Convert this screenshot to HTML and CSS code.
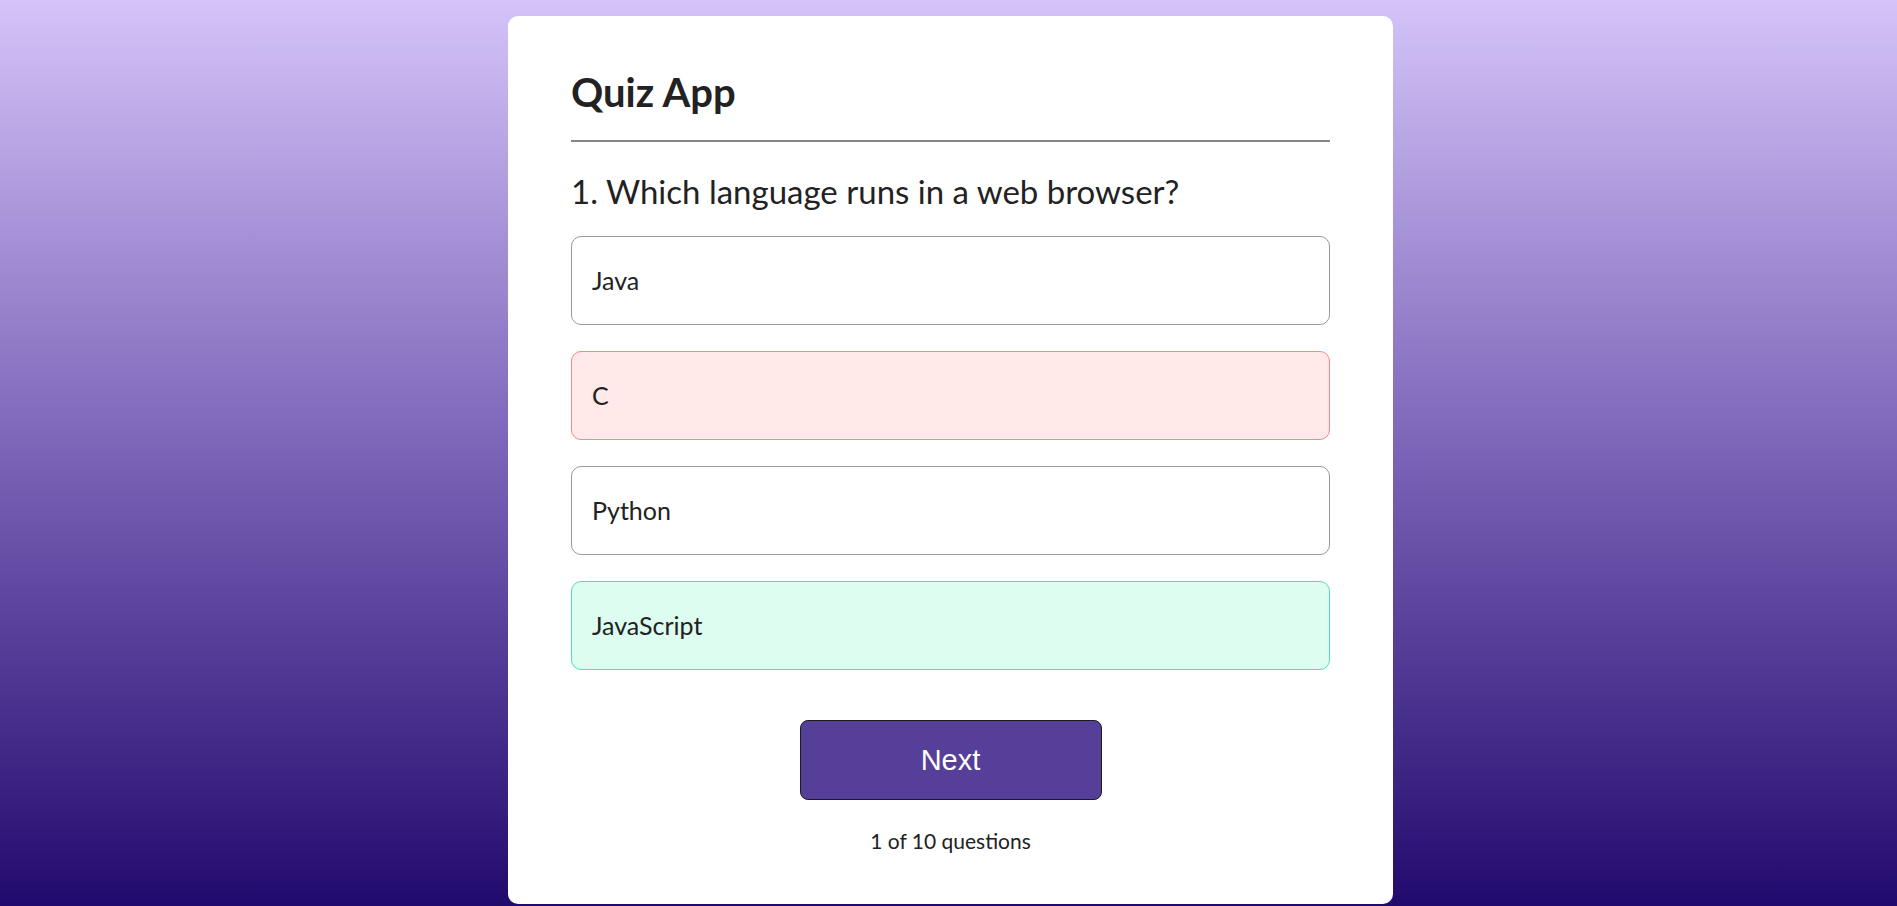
FILE: index.html
```html
<!DOCTYPE html>
<html lang="en">
<head>
<meta charset="utf-8">
<title>Quiz App</title>
<link rel="stylesheet" href="styles.css">
</head>
<body>
<main class="app">
  <h1 class="title">Quiz App</h1>
  <section class="quiz">
    <h2 class="question">1. Which language runs in a web browser?</h2>
    <div class="answers">
      <button class="answer">Java</button>
      <button class="answer incorrect">C</button>
      <button class="answer">Python</button>
      <button class="answer correct">JavaScript</button>
    </div>
    <button class="next-btn">Next</button>
    <p class="progress">1 of 10 questions</p>
  </section>
</main>
</body>
</html>
```
FILE: styles.css
```css
* {
  box-sizing: border-box;
}

html, body {
  margin: 0;
  padding: 0;
}

body {
  min-height: 100vh;
  padding-left: 4px;
  background: linear-gradient(180deg, #d4c4f9 0%, #7b63b7 50%, #210a6d 100%);
  font-family: "Lato", "Noto Sans", sans-serif;
  color: #222;
  overflow: hidden;
}

.app {
  width: 885px;
  margin: 16px auto 0;
  background: #fff;
  border-radius: 10px;
  padding: 54px 63px 51px;
}

.title {
  margin: 0;
  font-size: 40px;
  line-height: 44px;
  font-weight: 700;
  color: #222;
  padding-bottom: 26px;
  border-bottom: 2px solid #858585;
}

.quiz {
  display: flex;
  flex-direction: column;
}

.question {
  margin: 29px 0 25px;
  font-size: 33px;
  line-height: 40px;
  font-weight: 400;
  color: #222;
}

.answers {
  display: flex;
  flex-direction: column;
  gap: 26px;
}

.answer {
  display: block;
  width: 100%;
  text-align: left;
  font-family: inherit;
  font-size: 25px;
  line-height: 27px;
  color: #222;
  background: #fff;
  border: 1px solid #999;
  border-radius: 10px;
  padding: 30px 20px;
}

.answer.incorrect {
  background: #ffe9e9;
  border-color: #ff8585;
}

.answer.correct {
  background: #dcfdf0;
  border-color: #4fe0b4;
}

.next-btn {
  align-self: center;
  width: 302px;
  height: 80px;
  margin-top: 50px;
  background: #563f99;
  color: #fff;
  border: 1px solid #1c1c1c;
  border-radius: 8px;
  font-family: "Liberation Sans", Arial, sans-serif;
  font-size: 29px;
}

.progress {
  margin: 29px 0 0;
  text-align: center;
  font-size: 21px;
  line-height: 24px;
  color: #222;
}
```
